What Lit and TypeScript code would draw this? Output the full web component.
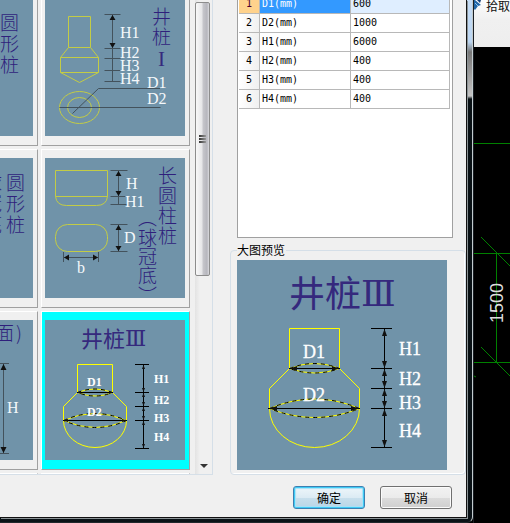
import { LitElement, html, svg, css, TemplateResult } from "lit";
import { customElement, property, state } from "lit/decorators.js";
import { classMap } from "lit/directives/class-map.js";

type Param = { name: string; value: string };

const PARAMS: Param[] = [
  { name: "D1(mm)", value: "600" },
  { name: "D2(mm)", value: "1000" },
  { name: "H1(mm)", value: "6000" },
  { name: "H2(mm)", value: "400" },
  { name: "H3(mm)", value: "400" },
  { name: "H4(mm)", value: "400" },
];

/** Stacks characters top to bottom; y is the first baseline. */
const column = (chars: string, x: number, y: number, pitch: number) =>
  [...chars].map((c, i) => svg`<text class="cn" x=${x} y=${y + i * pitch}>${c}</text>`);

/** Pair of arrow heads at both ends of a dimension span. */
const arrowV = (x: number, a: number, b: number, w: number, h: number) => svg`
  <path class="head" d="M${x} ${a}l${w} ${h}h${-2 * w}zM${x} ${b}l${w} ${-h}h${-2 * w}z"/>`;
const arrowH = (y: number, a: number, b: number, w: number, h: number) => svg`
  <path class="head" d="M${a} ${y}l${h} ${w}v${-2 * w}zM${b} ${y}l${-h} ${w}v${-2 * w}z"/>`;

const drawings: Record<string, () => TemplateResult> = {
  round1: () => svg`${column("圆形桩", 107, 34, 21)}`,
  round2: () => svg`
    ${column("圆形桩", 113, 32, 21)}
    ${column("球冠底", 90, 32, 21)}`,
  section: () => svg`
    <text class="cn" x="102" y="20">面</text>
    <text class="cn" x="123" y="20">)</text>
    <path class="dim" d="M110.500 43.500V133.500M104 43.500h12M104 133.500h12"/>
    ${arrowV(110.5, 44, 133, 3, 6)}
    <text class="lat" x="114" y="93">H</text>`,
  well1: () => svg`
    <path class="soft" d="M23.500 20.500h22v31h-22zM23.500 51.500L15.500 61.500v15h38v-15L45.500 51.500M15.500 61.500h38M15.500 76.500L34.500 86.500L53.500 76.500"/>
    <ellipse class="soft" cx="34.500" cy="111.500" rx="20" ry="16"/>
    <ellipse class="soft" cx="34.500" cy="111.500" rx="12" ry="10"/>
    <path class="dim" d="M67.500 18.500v67M59.500 18.500h16M59.500 52.500h16M59.500 62.500h16M59.500 74.500h16M59.500 85.500h16M27.500 117.500L53.500 92.500H115M14.500 111.500H115.500"/>
    ${arrowV(67.5, 19, 52, 3, 5)}
    <text class="lat" x="75" y="42">H1</text>
    <text class="lat" x="75" y="62">H2</text>
    <text class="lat" x="75" y="75">H3</text>
    <text class="lat" x="75" y="88">H4</text>
    <text class="lat" x="102" y="92">D1</text>
    <text class="lat" x="102" y="108">D2</text>
    ${column("井桩", 107, 28, 20)}
    <text class="rom" x="113" y="70">I</text>`,
  oblong: () => svg`
    <path class="soft" d="M10.500 12.500h52v26h-52zM10.500 38.500q1 9 11 9h30q10 0 11 -9"/>
    <rect class="soft" x="10.500" y="66.500" width="52" height="27" rx="12"/>
    <path class="dim" d="M73.500 12.500v34M65.500 12.500h17M65.500 38.500h17M65.500 46.500h17M73.500 66.500v27M65.500 66.500h17M65.500 93.500h17M18.500 99.500h35M18.500 94v10M53.500 94v10"/>
    ${arrowV(73.5, 13, 38, 3, 5)}
    ${arrowV(73.5, 67, 93, 3, 5)}
    ${arrowH(99.5, 19, 53, 3, 5)}
    <text class="lat" x="81" y="31">H</text>
    <text class="lat" x="80" y="49">H1</text>
    <text class="lat" x="79" y="85">D</text>
    <text class="lat" x="32" y="115">b</text>
    ${column("长圆柱桩", 113, 25, 20)}
    ${column("︵", 93, 67, 18)}
    ${column("球冠底", 93, 87, 19)}
    ${column("︶", 93, 145, 18)}`,
  well3: () => svg`
    <text class="title" x="36" y="27">井桩</text>
    <text class="roman" x="80" y="26">Ⅲ</text>
    <path class="line" d="M32.500 72.500v-28h35v28M32.500 72.500L18.500 86.500v14M67.500 72.500L81.500 86.500v14A31.500 27 0 0 1 18.500 100.500"/>
    <path class="line" d="M32.500 72.500q17 -7 35 0q-17 7 -35 0M18.500 100.500q31 -14 63 0q-31 14 -63 0"/>
    <path class="dash" d="M32.500 72.500q17 -7 35 0q-17 7 -35 0M18.500 100.500q31 -14 63 0q-31 14 -63 0"/>
    <path class="ink" d="M32 72.500h36M18 100.500h64M98.500 44.500v84M90 44.500h14M90 72.500h14M90 86.500h14M90 100.500h14M90 128.500h14"/>
    ${arrowH(72.5, 32, 68, 1.5, 4)}
    ${arrowH(100.5, 18, 82, 1.5, 5)}
    ${arrowV(98.5, 45, 72, 1.5, 4)}
    ${arrowV(98.5, 73, 86, 1.5, 4)}
    ${arrowV(98.5, 87, 100, 1.5, 4)}
    ${arrowV(98.5, 101, 128, 1.5, 4)}
    <text class="bold" x="42" y="66">D1</text>
    <text class="bold" x="42" y="96">D2</text>
    <text class="bold" x="109" y="63">H1</text>
    <text class="bold" x="109" y="84">H2</text>
    <text class="bold" x="109" y="102">H3</text>
    <text class="bold" x="109" y="121">H4</text>`,
  preview: () => svg`
    <text class="big" x="52" y="47">井桩</text>
    <text class="bigroman" x="124" y="46">Ⅲ</text>
    <path class="line" d="M52.500 108.500v-40h50v40M52.500 108.500L32.500 128.500v20M102.500 108.500L122.500 128.500v20A45 39 0 0 1 32.500 148.500"/>
    <path class="line" d="M52.500 108.500q25 -10 50 0q-25 9 -50 0M32.500 148.500q45 -19 90 0q-45 18 -90 0"/>
    <path class="dash" d="M52.500 108.500q25 -10 50 0q-25 9 -50 0M32.500 148.500q45 -19 90 0q-45 18 -90 0"/>
    <path class="ink" d="M52 108.500h51M31 148.500h92M147.500 68.500v119M134 68.500h21M134 108.500h21M134 128.500h21M134 148.500h21M134 187.500h21"/>
    ${arrowH(108.5, 53, 102, 2.5, 7)}
    ${arrowH(148.5, 32, 122, 2.5, 8)}
    ${arrowV(147.5, 69, 108, 2.5, 7)}
    ${arrowV(147.5, 109, 128, 2.5, 7)}
    ${arrowV(147.5, 129, 148, 2.5, 7)}
    ${arrowV(147.5, 149, 187, 2.5, 7)}
    <text class="mid" x="66" y="98">D1</text>
    <text class="mid" x="66" y="141">D2</text>
    <text class="mid" x="162" y="95">H1</text>
    <text class="mid" x="162" y="125">H2</text>
    <text class="mid" x="162" y="149">H3</text>
    <text class="mid" x="162" y="177">H4</text>`,
};

@customElement("pile-drawing")
export class PileDrawing extends LitElement {
  @property() kind = "well3";
  @property({ type: Number }) size = 140;

  static styles = css`
    :host { display: block; background: #7093a9; }
    svg { display: block; }
    path, ellipse, rect { fill: none; stroke-width: 1; }
    .soft { stroke: #c3cc45; }
    .line { stroke: #ffff00; }
    .dim { stroke: #43525c; }
    .ink { stroke: #000; shape-rendering: crispEdges; }
    .dash { stroke: #000; stroke-dasharray: 4 4; }
    .head { fill: #111; }
    text { fill: #f4f8fb; font-family: "Liberation Serif", serif; }
    .lat { font-size: 16px; }
    .mid { font-size: 18px; fill: #fff; stroke: #fff; stroke-width: 0.3; }
    .bold { font-size: 12px; font-weight: 700; fill: #fff; }
    .cn, .title, .big { fill: #35297d; font-family: "Noto Sans CJK SC", sans-serif; font-weight: 400; }
    .cn { font-size: 19px; font-weight: 300; fill: #2f1f7c; }
    .title { font-size: 22px; }
    .big { font-size: 36px; }
    .rom, .roman, .bigroman { fill: #35297d; font-family: "DejaVu Serif", serif; }
    .rom { font-size: 21px; font-family: "Liberation Serif", serif; }
    .roman { font-size: 22px; }
    .bigroman { font-size: 36px; }
  `;

  render() {
    return html`<svg width=${this.size} height=${this.size} viewBox="0 0 ${this.size} ${this.size}" role="img" aria-label=${this.kind}>
      ${drawings[this.kind]?.()}
    </svg>`;
  }
}

@customElement("cad-pane")
export class CadPane extends LitElement {
  static styles = css`
    :host { display: flex; flex-direction: column; background: #000; overflow: hidden; }
    .bar {
      display: flex; gap: 4px; height: 47px; flex: none; box-sizing: border-box;
      background: linear-gradient(#fdfdfd, #f0f0f0 20px, #eee);
      font: 12px/12px "Noto Sans CJK SC", sans-serif; color: #111; white-space: nowrap;
    }
    .bar svg { flex: none; }
    .view { display: block; flex: none; }
    .grid { fill: none; stroke: #008000; }
    .len { fill: #dcdcdc; font: 18px "Liberation Sans", sans-serif; }
  `;

  render() {
    return html`
      <div class="bar">
        <svg width="8" height="12" viewBox="0 0 8 12">
          <path d="M1 0l6 5-3 1-3 4-1-1V0z" fill="#2166a8" />
          <path d="M3 0l3 3 1-3z" fill="#123f78" />
          <path d="M1 3l3 3" stroke="#8fc4ee" />
        </svg>
        <span>拾取</span>
      </div>
      <svg class="view" width="36" height="476" viewBox="0 0 36 476">
        <path class="grid" d="M0 96.500H36M0 206.500H36M0 315.500H36M22.500 206V316M7 190L36 219M7 300L36 329M0 329l2 1" />
        <text class="len" transform="translate(29 276) rotate(-90)">1500</text>
      </svg>`;
  }
}

@customElement("app-root")
export class AppRoot extends LitElement {
  @state() private selected = "well3";

  static styles = css`
    :host {
      display: flex; height: 100vh; min-height: 523px; background: #000; overflow: hidden;
      font: 12px/16px "Noto Sans CJK SC", sans-serif; color: #000;
    }
    cad-pane { flex: 0 0 36px; border-left: 1px solid #1a1f24; }
    .frame {
      flex: 1; min-width: 0; display: flex; box-sizing: border-box;
      padding: 0 4px 4px 0; border-right: 1px solid #c3cccf; border-bottom: 1px solid #20282c;
      border-bottom-right-radius: 6px;
      background: linear-gradient(#c5dcf5, #bcd6f2 42px, #777 52px, #c4c4c4 96px, #0a1216 99px);
    }
    .client {
      flex: 1; min-width: 0; display: flex; flex-direction: column; background: #f0f0f0;
      border-right: 1px solid #111; border-bottom: 1px solid #111; box-shadow: 1px 1px 0 #8b9396;
      margin: 0 1px 0 0;
    }
    .main { flex: 1; min-height: 0; display: flex; }

    .gallery {
      flex: 1; min-width: 0; display: flex; overflow: hidden; box-sizing: border-box;
      border-right: 1px solid #d5dfe8; border-bottom: 1px solid #d5dfe8;
    }
    .tiles {
      flex: 1; min-width: 0; display: grid; grid-template-columns: 149px 149px; gap: 3px;
      justify-content: end; align-content: start; margin: -13px 5px 0 0;
    }
    .tile {
      display: block; box-sizing: border-box; height: 159px; margin: 0; padding: 8px 4px 9px 3px;
      border: 1px solid; border-color: #fff #a0a0a0 #a0a0a0 #fff; background: #f0f0f0; text-align: left;
    }
    .tile.on { background: #00ffff; }
    .scroll {
      flex: 0 0 17px; display: flex; flex-direction: column; justify-content: space-between;
      background: linear-gradient(90deg, #e3e3e3, #f0f0f0 5px, #f0f0f0);
    }
    .thumb {
      display: flex; flex-direction: column; align-items: center; justify-content: center; gap: 1px;
      width: 15px; height: 274px; margin-top: 2px; box-sizing: border-box;
      border: 1px solid #8c8c8c; border-radius: 2px;
      background: linear-gradient(90deg, #f8f8f8, #e6e6e8 6px, #c6c6cb 7px, #b6b6bd 11px, #dcdce0);
    }
    .thumb i { width: 7px; height: 2px; background: linear-gradient(90deg, #333, #999); }
    .down { align-self: center; margin-bottom: 6px; border: 4px solid transparent; border-top-color: #333; border-bottom: 0; }

    .side { flex: 0 0 253px; display: flex; flex-direction: column; }
    .params {
      flex: 1; min-height: 0; overflow: hidden; margin: 0 13px 0 24px; padding-left: 1px;
      border: 1px solid #a0a0a0; border-top: 0; background: #fff;
    }
    table { margin-top: -5px; border-spacing: 0; table-layout: fixed; width: 211px; font: 10px/18px "DejaVu Sans Mono", monospace; }
    .c0 { width: 21px; }
    .c1 { width: 91px; }
    th, td { height: 18px; padding: 0 0 0 2px; border-right: 1px solid #b8b8b8; border-bottom: 1px solid #b8b8b8; text-align: left; font-weight: 400; }
    th { padding: 0; text-align: center; background: linear-gradient(90deg, #fff, #f0f0f0); }
    .on th { background: #ffd28c; color: #4a0030; }
    .on td { background: #dfeeff; }
    .on .name { background: #3399ff; color: #fff; }

    fieldset {
      margin: 4px 0 0 17px; padding: 2px 0 4px 6px; min-width: 0;
      border: 1px solid #d5dfe8; border-radius: 4px; box-shadow: inset -1px -1px 0 #fff;
    }
    legend { padding: 0 1px 0 0; line-height: 16px; }
    pile-drawing.large { width: 210px; }

    footer { display: flex; justify-content: flex-end; gap: 15px; padding: 11px 14px 8px; }
    footer button {
      box-sizing: border-box; width: 72px; height: 23px; padding: 0; font: inherit; line-height: 20px; color: #000;
      border: 1px solid #707070; border-radius: 3px; box-shadow: inset 0 0 0 1px #fbfbfb;
      background: linear-gradient(#f2f2f2, #ebebeb 50%, #dcdcdc 50%, #cfcfcf);
    }
    footer .primary {
      border-color: #3c7fb1; box-shadow: inset 0 0 0 1px #3fcbf5, inset 0 0 1px 2px #a8e2f8;
      background: linear-gradient(#eef6fa, #dcebf4 50%, #c8dfec 50%, #b9d6e6);
    }
  `;

  private tile(kind: string) {
    const on = kind !== "" && kind === this.selected;
    return html`<button class=${classMap({ tile: true, on })} aria-pressed=${on} aria-label=${kind || "empty"}
      @click=${() => (this.selected = kind)}>
      ${kind ? html`<pile-drawing kind=${kind}></pile-drawing>` : ""}
    </button>`;
  }

  render() {
    const kinds = ["round1", "well1", "round2", "oblong", "section", "well3", "", ""];
    return html`
      <div class="frame">
        <div class="client">
          <div class="main">
            <div class="gallery">
              <div class="tiles">${kinds.map((k) => this.tile(k))}</div>
              <div class="scroll">
                <div class="thumb"><i></i><i></i><i></i></div>
                <div class="down"></div>
              </div>
            </div>
            <div class="side">
              <div class="params">
                <table>
                  <colgroup><col class="c0" /><col class="c1" /><col /></colgroup>
                  <tbody>
                    ${PARAMS.map((p, i) => html`<tr class=${classMap({ on: i === 0 })}>
                      <th scope="row">${i + 1}</th><td class="name">${p.name}</td><td>${p.value}</td>
                    </tr>`)}
                  </tbody>
                </table>
              </div>
              <fieldset>
                <legend>大图预览</legend>
                <pile-drawing class="large" kind="preview" size="210"></pile-drawing>
              </fieldset>
            </div>
          </div>
          <footer>
            <button class="primary">确定</button>
            <button>取消</button>
          </footer>
        </div>
      </div>
      <cad-pane></cad-pane>`;
  }
}
